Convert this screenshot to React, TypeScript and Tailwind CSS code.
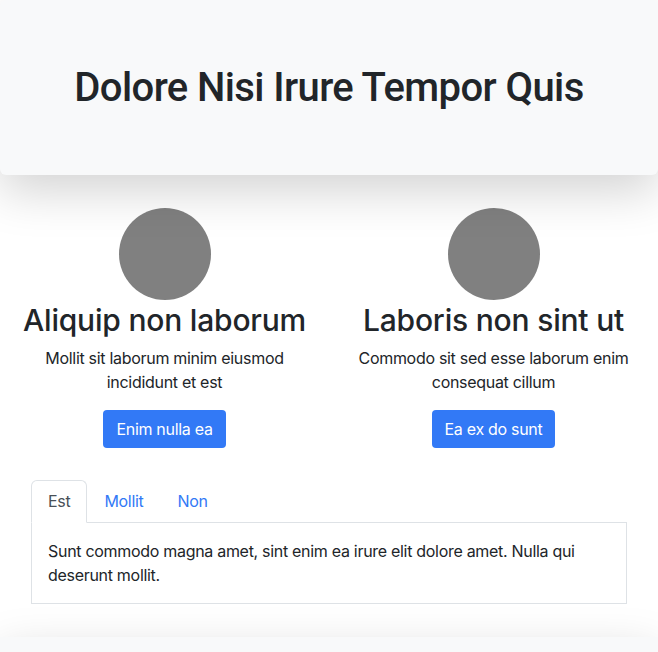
import React from "react";

const cards = [
  { title: "Aliquip non laborum", text: "Mollit sit laborum minim eiusmod incididunt et est", btn: "Enim nulla ea" },
  { title: "Laboris non sint ut", text: "Commodo sit sed esse laborum enim consequat cillum", btn: "Ea ex do sunt" },
];

export default function App() {
  return (
    <div className="h-[652px] bg-white text-[#212529] font-['Inter',sans-serif] tracking-[-0.3px] overflow-hidden">
      <header className="h-[175px] bg-[#f8f9fa] rounded-[6px] shadow-[0_16px_48px_rgba(0,0,0,0.175)] flex items-center justify-center relative z-10">
        <h1 className="font-['Roboto',Arial,sans-serif] text-[40px] leading-[48px] tracking-[-0.6px] font-medium">
          Dolore Nisi Irure Tempor Quis
        </h1>
      </header>

      <section className="grid grid-cols-2 mt-[33px]">
        {cards.map((c) => (
          <div key={c.title} className="flex flex-col items-center text-center px-[22px]">
            <div className="w-[92px] h-[92px] rounded-full bg-[#808080]" />
            <h2 className="text-[30px] leading-[36px] font-medium mt-[2px] tracking-[-0.2px]">{c.title}</h2>
            <p className="text-[16px] leading-[24px] mt-[8px] max-w-[280px]">{c.text}</p>
            <button className="mt-[16px] h-[38px] px-[13px] rounded-[4px] bg-[#3279f6] text-white text-[16px] leading-[24px]">
              {c.btn}
            </button>
          </div>
        ))}
      </section>

      <section className="px-[31px] mt-[32px]">
        <div className="flex border-b border-[#dee2e6]">
          <div className="px-[16px] py-[8px] border border-[#dee2e6] border-b-white -mb-px rounded-t-[6px] bg-white text-[#495057] text-[16px] leading-[24px]">Est</div>
          <div className="px-[16px] py-[8px] border border-transparent text-[#3279f6] text-[16px] leading-[24px]">Mollit</div>
          <div className="px-[16px] py-[8px] border border-transparent text-[#3279f6] text-[16px] leading-[24px]">Non</div>
        </div>
        <div className="border border-t-0 border-[#dee2e6] px-[16px] pt-[16px] pb-[16px] text-[16px] leading-[24px]">
          Sunt commodo magna amet, sint enim ea irure elit dolore amet. Nulla qui deserunt mollit.
        </div>
      </section>

      <footer className="mt-[33px] h-[60px] bg-[#f8f9fa] shadow-[0_16px_48px_rgba(0,0,0,0.175)]" />
    </div>
  );
}
